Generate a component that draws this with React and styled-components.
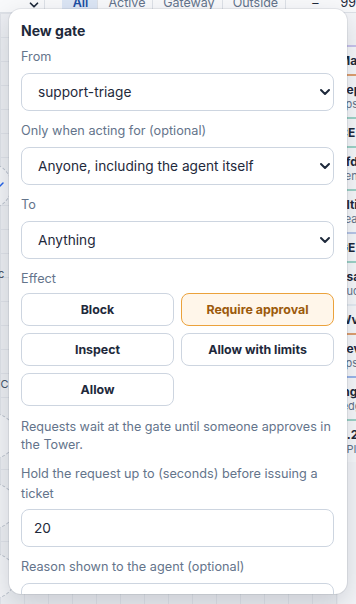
import React from 'react';
import styled, { createGlobalStyle } from 'styled-components';
import { ChevronDown, Check } from 'lucide-react';

const GlobalStyle = createGlobalStyle`
  html, body {
    margin: 0;
    padding: 0;
    background: #eceef2;
  }
  body {
    font-family: Inter, "Noto Sans", "Liberation Sans", sans-serif;
    color: #1e293b;
  }
  * {
    box-sizing: border-box;
  }
`;

const Screen = styled.div`
  position: relative;
  width: 356px;
  height: 604px;
  overflow: hidden;
  display: flex;
  flex-direction: column;
`;

const Toolbar = styled.div`
  height: 13px;
  flex-shrink: 0;
  display: flex;
  align-items: flex-end;
  background: #f8f9fb;
  border-bottom: 1px solid #dde1e7;
  overflow: hidden;
  font-size: 12.5px;
  line-height: 18px;
  color: #64748b;
`;

const ToolbarCaret = styled.div`
  width: 45px;
  display: flex;
  justify-content: flex-end;
  padding-right: 3px;
  align-self: stretch;
  align-items: flex-end;
  border-right: 1px solid #dde1e7;
  color: #1e293b;
`;

const Tab = styled.div`
  width: ${(p) => p.w}px;
  padding-left: ${(p) => (p.active ? 11 : 10)}px;
  margin-left: ${(p) => (p.first ? '17px' : '0')};
  background: ${(p) => (p.active ? '#dce6f5' : 'transparent')};
  color: ${(p) => (p.active ? '#1d4ea3' : '#64748b')};
  font-weight: ${(p) => (p.active ? 600 : 400)};
  border-right: 1px solid #dde1e7;
  white-space: nowrap;
`;

const Stepper = styled.div`
  margin-left: 26px;
  display: flex;
  gap: 22px;
  color: #1e293b;
  white-space: nowrap;
`;

const Workspace = styled.div`
  flex: 1;
  display: flex;
  min-height: 0;
`;

const Canvas = styled.div`
  position: relative;
  flex: 1;
  background-color: #eceef2;
  background-image:
    linear-gradient(to right, #dfe2e8 1px, transparent 1px),
    linear-gradient(to bottom, #dfe2e8 1px, transparent 1px);
  background-size: 24px 24px;
`;

const Node = styled.div`
  position: absolute;
  width: 46px;
  height: 46px;
  border-radius: 50%;
  border: 1px dashed #b9c0cb;
  background: #f3f4f7;
  display: flex;
  align-items: center;
  justify-content: flex-end;
  padding-right: 6px;
  color: #2563eb;
`;

const NodeLabel = styled.div`
  position: absolute;
  font-size: 11px;
  color: #475569;
  white-space: nowrap;
`;

const SideList = styled.div`
  width: 18px;
  flex-shrink: 0;
  padding-top: 32px;
  background: #f4f5f8;
  display: flex;
  flex-direction: column;
  overflow: hidden;
`;

const SideCard = styled.div`
  padding: 6px 0 6px 1px;
  border-top: 2px solid ${(p) => p.tone};
  background: #f8f9fb;
  white-space: nowrap;
`;

const SideTitle = styled.div`
  font-size: 12px;
  font-weight: 700;
  line-height: 15px;
  color: #1e293b;
`;

const SideSub = styled.div`
  font-size: 11px;
  line-height: 14px;
  color: #64748b;
`;

const Popover = styled.div`
  position: absolute;
  left: 9px;
  top: 9px;
  width: 338px;
  height: 585px;
  padding: 12px 13px 0 12px;
  background: #ffffff;
  border-radius: 12px;
  box-shadow: 0 10px 28px rgba(15, 23, 42, 0.16), 0 0 0 1px rgba(15, 23, 42, 0.07);
  overflow: hidden;
  display: flex;
  flex-direction: column;
  gap: 10px;
`;

const Title = styled.h2`
  margin: 0 0 -4px;
  font-size: 14px;
  line-height: 20px;
  font-weight: 700;
  color: #1e293b;
`;

const Field = styled.div`
  display: flex;
  flex-direction: column;
  flex-shrink: 0;
`;

const Label = styled.label`
  font-size: 12.7px;
  line-height: ${(p) => (p.multi ? '19.5px' : '20px')};
  color: #64748b;
  margin-bottom: ${(p) => (p.tight ? '4px' : '6px')};
`;

const SelectWrap = styled.div`
  position: relative;
  height: 38px;
`;

const Select = styled.select`
  appearance: none;
  width: 100%;
  height: 100%;
  padding: 0 32px 0 16px;
  border: 1px solid #cdd5e0;
  border-radius: 8px;
  background: #ffffff;
  font-family: inherit;
  font-size: 13.7px;
  color: #1e293b;
  outline: none;
`;

const Caret = styled.span`
  position: absolute;
  right: 1px;
  top: 11px;
  display: flex;
  color: #1e293b;
  pointer-events: none;
`;

const Input = styled.input`
  width: 100%;
  height: 38px;
  padding: 0 12px;
  border: 1px solid #cdd5e0;
  border-radius: 8px;
  background: #ffffff;
  font-family: inherit;
  font-size: 13.7px;
  color: #1e293b;
  outline: none;
  flex-shrink: 0;
`;

const EffectGrid = styled.div`
  display: grid;
  grid-template-columns: 1fr 1fr;
  gap: 7px 7px;
`;

const EffectButton = styled.button`
  height: 33px;
  border-radius: 8px;
  border: 1px solid ${(p) => (p.selected ? '#eba23c' : '#cdd5e0')};
  background: ${(p) => (p.selected ? '#fff6ea' : '#ffffff')};
  color: ${(p) => (p.selected ? '#9c5a0c' : '#1e293b')};
  font-family: inherit;
  font-size: 12.4px;
  font-weight: 700;
  cursor: pointer;
`;

const Hint = styled.p`
  margin: 12px 0 0;
  font-size: 12.6px;
  line-height: 18px;
  color: #64748b;
`;

const effects = ['Block', 'Require approval', 'Inspect', 'Allow with limits', 'Allow'];

const sideCards = [
  { tone: '#c9c3ec', title: 'Mail', sub: '' },
  { tone: '#e0a070', title: 'deploy', sub: 'ops' },
  { tone: '#9fd3c7', title: 'CE', sub: '' },
  { tone: '#9fd3c7', title: 'sfdc', sub: 'sentinel' },
  { tone: '#9fd3c7', title: 'ulti', sub: 'search' },
  { tone: '#b9c7e8', title: 'GE', sub: '' },
  { tone: '#9fd3c7', title: 'usage', sub: 'Audit' },
  { tone: '#e6ecf3', title: 'Wv', sub: '' },
  { tone: '#e0a070', title: 'dev', sub: 'ops' },
  { tone: '#9bb6ea', title: 'ingest', sub: 'ledger' },
  { tone: '#9fd3c7', title: '4.2', sub: 'API' },
];

export default function App() {
  return (
    <>
      <GlobalStyle />
      <Screen>
        <Toolbar>
          <ToolbarCaret>
            <ChevronDown size={14} strokeWidth={3} />
          </ToolbarCaret>
          <Tab first active w={37}>All</Tab>
          <Tab w={55}>Active</Tab>
          <Tab w={70}>Gateway</Tab>
          <Tab w={64}>Outside</Tab>
          <Stepper>
            <span>–</span>
            <span>99</span>
          </Stepper>
        </Toolbar>
        <Workspace>
          <Canvas>
            <Node style={{ left: -34, top: 150 }}>
              <Check size={12} strokeWidth={3} />
            </Node>
            <NodeLabel style={{ left: -6, top: 254 }}>rc</NodeLabel>
            <NodeLabel style={{ left: -6, top: 364 }}>FC</NodeLabel>
            <Node style={{ left: -30, top: 400 }} />
            <Node style={{ left: -30, top: 470 }} />
            <Node style={{ left: -30, top: 540 }} />
          </Canvas>
          <SideList>
            {sideCards.map((c, i) => (
              <SideCard key={i} tone={c.tone}>
                <SideTitle>{c.title}</SideTitle>
                {c.sub && <SideSub>{c.sub}</SideSub>}
              </SideCard>
            ))}
          </SideList>
        </Workspace>

        <Popover>
          <Title>New gate</Title>

          <Field>
            <Label>From</Label>
            <SelectWrap>
              <Select defaultValue="support-triage">
                <option>support-triage</option>
              </Select>
              <Caret><ChevronDown size={16} strokeWidth={3} /></Caret>
            </SelectWrap>
          </Field>

          <Field>
            <Label>Only when acting for (optional)</Label>
            <SelectWrap>
              <Select defaultValue="anyone">
                <option value="anyone">Anyone, including the agent itself</option>
              </Select>
              <Caret><ChevronDown size={16} strokeWidth={3} /></Caret>
            </SelectWrap>
          </Field>

          <Field>
            <Label>To</Label>
            <SelectWrap>
              <Select defaultValue="anything">
                <option value="anything">Anything</option>
              </Select>
              <Caret><ChevronDown size={16} strokeWidth={3} /></Caret>
            </SelectWrap>
          </Field>

          <Field>
            <Label tight>Effect</Label>
            <EffectGrid>
              {effects.map((e) => (
                <EffectButton key={e} type="button" selected={e === 'Require approval'}>
                  {e}
                </EffectButton>
              ))}
            </EffectGrid>
            <Hint>Requests wait at the gate until someone approves in the Tower.</Hint>
          </Field>

          <Field>
            <Label multi>Hold the request up to (seconds) before issuing a ticket</Label>
            <Input defaultValue="20" />
          </Field>

          <Field>
            <Label>Reason shown to the agent (optional)</Label>
            <Input />
          </Field>
        </Popover>
      </Screen>
    </>
  );
}
